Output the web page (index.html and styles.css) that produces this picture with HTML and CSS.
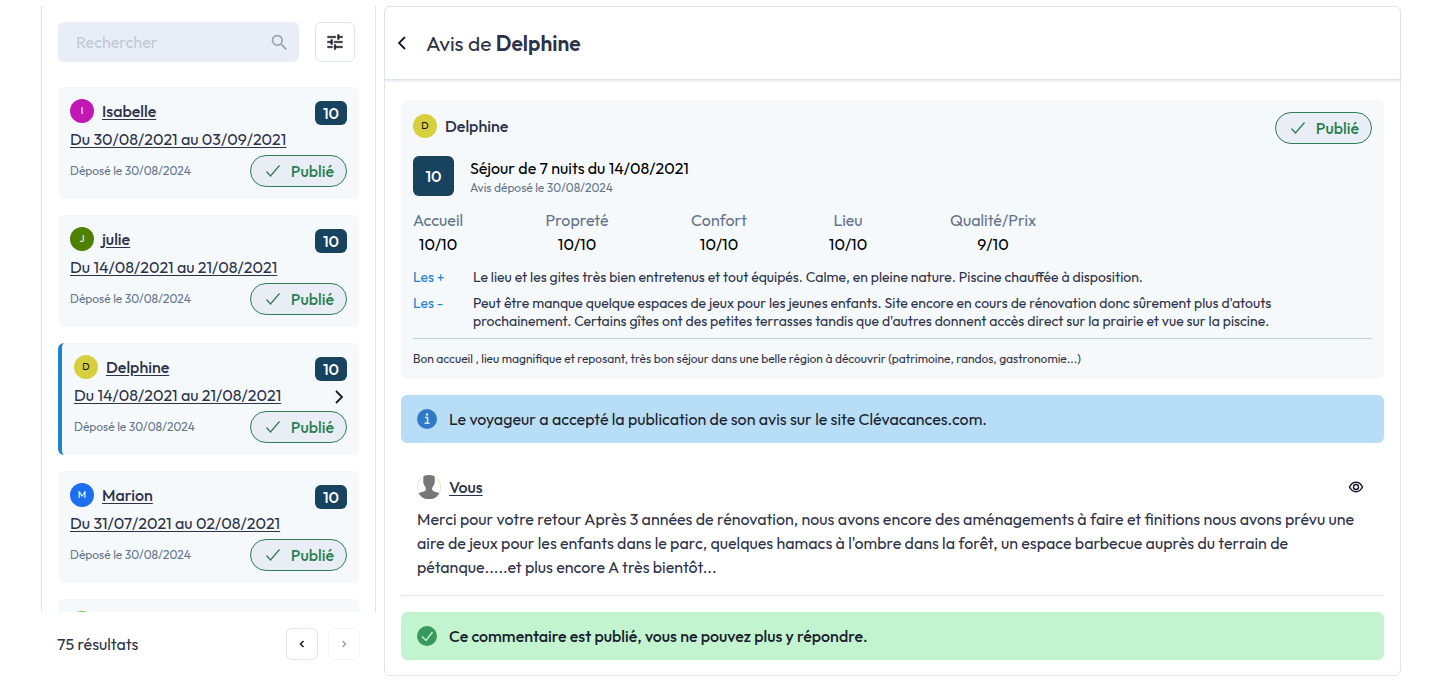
FILE: index.html
```html
<!DOCTYPE html>
<html lang="fr">
<head>
<meta charset="utf-8">
<meta name="viewport" content="width=device-width, initial-scale=1">
<title>Avis de Delphine</title>
<link rel="stylesheet" href="styles.css">
</head>
<body>
<svg class="sprite" aria-hidden="true">
  <symbol id="check" viewBox="0 0 16 16"><path d="M1.500 8.500 5.500 13 14.500 2.500" fill="none" stroke="currentColor" stroke-width="1.300"/></symbol>
  <symbol id="left" viewBox="0 0 16 16"><path d="M11 2 5 8l6 6" fill="none" stroke="currentColor" stroke-width="1.800"/></symbol>
  <symbol id="right" viewBox="0 0 16 16"><path d="M5 2l6 6-6 6" fill="none" stroke="currentColor" stroke-width="1.800"/></symbol>
</svg>
<main class="layout">
  <aside class="sidebar">
    <div class="list-panel">
      <form class="search" role="search">
        <label class="search-box">
          <input class="search-input" type="search" placeholder="Rechercher" aria-label="Rechercher">
          <svg class="search-icon" viewBox="0 0 24 24"><path fill="currentColor" d="M15.500 14h-.79l-.28-.27A6.470 6.470 0 0 0 16 9.500 6.500 6.500 0 1 0 9.500 16c1.610 0 3.090-.59 4.230-1.570l.27.28v.79l5 4.990L20.490 19l-4.990-5zm-6 0a4.500 4.500 0 1 1 0-9 4.500 4.500 0 0 1 0 9z"/></svg>
        </label>
        <button class="icon-button filter" type="button" aria-label="Filtres">
          <svg class="filter-icon" viewBox="0 0 24 24"><path fill="currentColor" stroke="currentColor" stroke-width=".4" d="M3 17v2h6v-2H3zM3 5v2h10V5H3zm10 16v-2h8v-2h-8v-2h-2v6h2zM7 9v2H3v2h4v2h2V9H7zm14 4v-2H11v2h10zm-6-4h2V7h4V5h-4V3h-2v6z"/></svg>
        </button>
      </form>
      <div class="cards">
        <article class="card">
          <div class="card-top">
            <div class="card-info">
              <div class="person"><span class="avatar magenta">I</span><a class="name" href="#isabelle">Isabelle</a></div>
              <a class="dates" href="#isabelle">Du 30/08/2021 au 03/09/2021</a>
            </div>
            <div class="card-side"><span class="score">10</span></div>
          </div>
          <div class="card-bottom"><span class="posted">Déposé le 30/08/2024</span><span class="pill"><svg class="pill-icon"><use href="#check"/></svg>Publié</span></div>
        </article>
        <article class="card">
          <div class="card-top">
            <div class="card-info">
              <div class="person"><span class="avatar green">J</span><a class="name" href="#julie">julie</a></div>
              <a class="dates" href="#julie">Du 14/08/2021 au 21/08/2021</a>
            </div>
            <div class="card-side"><span class="score">10</span></div>
          </div>
          <div class="card-bottom"><span class="posted">Déposé le 30/08/2024</span><span class="pill"><svg class="pill-icon"><use href="#check"/></svg>Publié</span></div>
        </article>
        <article class="card selected">
          <div class="card-top">
            <div class="card-info">
              <div class="person"><span class="avatar yellow">D</span><a class="name" href="#delphine">Delphine</a></div>
              <a class="dates" href="#delphine">Du 14/08/2021 au 21/08/2021</a>
            </div>
            <div class="card-side"><span class="score">10</span><svg class="chevron"><use href="#right"/></svg></div>
          </div>
          <div class="card-bottom"><span class="posted">Déposé le 30/08/2024</span><span class="pill"><svg class="pill-icon"><use href="#check"/></svg>Publié</span></div>
        </article>
        <article class="card">
          <div class="card-top">
            <div class="card-info">
              <div class="person"><span class="avatar blue">M</span><a class="name" href="#marion">Marion</a></div>
              <a class="dates" href="#marion">Du 31/07/2021 au 02/08/2021</a>
            </div>
            <div class="card-side"><span class="score">10</span></div>
          </div>
          <div class="card-bottom"><span class="posted">Déposé le 30/08/2024</span><span class="pill"><svg class="pill-icon"><use href="#check"/></svg>Publié</span></div>
        </article>
        <article class="card"><span class="avatar lime"></span></article>
      </div>
    </div>
    <footer class="pager">
      <span class="count">75 résultats</span>
      <button class="icon-button page" type="button" aria-label="Page précédente"><svg class="page-icon" viewBox="0 0 8 8"><path d="M5.500 1 2.500 4l3 3" fill="none" stroke="currentColor" stroke-width="1.500"/></svg></button>
      <button class="icon-button page" type="button" aria-label="Page suivante" disabled><svg class="page-icon" viewBox="0 0 8 8"><path d="M2.500 1l3 3-3 3" fill="none" stroke="currentColor" stroke-width="1.500"/></svg></button>
    </footer>
  </aside>

  <section class="detail">
    <header class="detail-header">
      <button class="back" type="button" aria-label="Retour"><svg class="chevron"><use href="#left"/></svg></button>
      <h1 class="title">Avis de <strong class="title-name">Delphine</strong></h1>
    </header>
    <div class="detail-body">
      <article class="review">
        <div class="review-head">
          <div class="person"><span class="avatar yellow">D</span><span class="author">Delphine</span></div>
          <span class="pill"><svg class="pill-icon"><use href="#check"/></svg>Publié</span>
        </div>
        <div class="stay">
          <span class="stay-score">10</span>
          <div class="stay-text"><h2 class="stay-title">Séjour de 7 nuits du 14/08/2021</h2><p class="posted">Avis déposé le 30/08/2024</p></div>
        </div>
        <dl class="grades">
          <div class="grade"><dt class="grade-label">Accueil</dt><dd class="grade-value">10/10</dd></div>
          <div class="grade"><dt class="grade-label">Propreté</dt><dd class="grade-value">10/10</dd></div>
          <div class="grade"><dt class="grade-label">Confort</dt><dd class="grade-value">10/10</dd></div>
          <div class="grade"><dt class="grade-label">Lieu</dt><dd class="grade-value">10/10</dd></div>
          <div class="grade"><dt class="grade-label">Qualité/Prix</dt><dd class="grade-value">9/10</dd></div>
        </dl>
        <dl class="points">
          <dt class="point-label">Les +</dt>
          <dd class="point-text">Le lieu et les gites très bien entretenus et tout équipés. Calme, en pleine nature. Piscine chauffée à disposition.</dd>
          <dt class="point-label">Les -</dt>
          <dd class="point-text">Peut être manque quelque espaces de jeux pour les jeunes enfants. Site encore en cours de rénovation donc sûrement plus d'atouts prochainement. Certains gîtes ont des petites terrasses tandis que d'autres donnent accès direct sur la prairie et vue sur la piscine.</dd>
        </dl>
        <p class="comment">Bon accueil , lieu magnifique et reposant, très bon séjour dans une belle région à découvrir (patrimoine, randos, gastronomie...)</p>
      </article>
      <div class="alert info">
        <svg class="alert-icon" viewBox="0 0 20 20"><circle cx="10" cy="10" r="10" fill="#3178c6"/><path d="M8 8.500h2.500V14M7.500 14.200h5" fill="none" stroke="#d7ebfa" stroke-width="1.500"/><circle cx="10" cy="5.500" r="1.200" fill="#d7ebfa"/></svg>
        <span class="alert-text">Le voyageur a accepté la publication de son avis sur le site Clévacances.com.</span>
      </div>
      <article class="reply">
        <div class="reply-head">
          <div class="person">
            <svg class="photo" viewBox="0 0 24 24"><circle cx="12" cy="12" r="11.700" fill="#fff" stroke="#d4d8a0" stroke-width=".6"/><path d="M6.600 1.300Q12-1.200 17.400 1.300C17.800 4 17.800 5.500 17.600 6.500c.4.500.2 2-.5 2.500-.4 1.600-1 2.700-1.900 3.500v2.800c1.500 1.700 5.300 1.700 7.200 3A12 12 0 0 1 1.600 18.300c1.900-1.300 5.700-1.300 7.200-3v-2.800C7.900 11.700 7.300 10.600 6.900 9c-.7-.5-.9-2-.5-2.500C6.200 5.500 6.200 4 6.600 1.300z" fill="#777"/></svg>
            <a class="name" href="#vous">Vous</a>
          </div>
          <button class="visibility" type="button" aria-label="Afficher"><svg class="eye" viewBox="0 0 16 16"><path d="M1.500 8C3 4.900 5.300 3.300 8 3.300S13 4.900 14.500 8C13 11.100 10.700 12.700 8 12.700S3 11.100 1.500 8z" fill="none" stroke="currentColor" stroke-width="1.500"/><circle cx="8" cy="8" r="2.500" fill="none" stroke="currentColor" stroke-width="1.400"/></svg></button>
        </div>
        <p class="reply-text">Merci pour votre retour Après 3 années de rénovation, nous avons encore des aménagements à faire et finitions nous avons prévu une aire de jeux pour les enfants dans le parc, quelques hamacs à l'ombre dans la forêt, un espace barbecue auprès du terrain de pétanque.....et plus encore A très bientôt...</p>
      </article>
      <div class="alert success">
        <svg class="alert-icon" viewBox="0 0 20 20"><circle cx="10" cy="10" r="10" fill="#38995c"/><path d="M5 10.500 9 14.500 15.500 6" fill="none" stroke="#c3f4d0" stroke-width="1.400"/></svg>
        <strong class="alert-text strong">Ce commentaire est publié, vous ne pouvez plus y répondre.</strong>
      </div>
    </div>
  </section>
</main>
</body>
</html>
```
FILE: styles.css
```css
* { box-sizing: border-box; }
body, h1, h2, p, dl, dd { margin: 0; }
body {
  font-family: Outfit, Lato, sans-serif;
  font-size: 16px;
  line-height: 24px;
  color: #2d3248;
  background: #fff;
}
button, input { font: inherit; color: inherit; }
button { padding: 0; border: 0; background: none; }
svg { display: block; flex: none; }
.sprite { position: absolute; width: 0; height: 0; }
.layout {
  display: grid;
  grid-template-columns: 335px minmax(0, 1fr);
  gap: 8px;
  height: 100vh;
  padding: 6px 39px 13px 41px;
}
.sidebar { display: flex; flex-direction: column; min-height: 0; }
.list-panel {
  flex: 1;
  min-height: 0;
  overflow: hidden;
  padding: 16px 16px 0;
  border: solid #dee4ee;
  border-width: 0 1px;
}
.search { display: flex; gap: 16px; margin: 0 4px 25px 0; }
.search-box {
  display: flex;
  flex: 1;
  align-items: center;
  min-width: 0;
  padding: 0 9px 0 18px;
  border-radius: 6px;
  background: #e9eef6;
}
.search-input { flex: 1; min-width: 0; height: 40px; padding: 0; border: 0; outline: 0; background: none; }
.search-input::placeholder { color: #bec9d7; opacity: 1; }
.search-icon { width: 21px; height: 21px; color: #97a5b9; }
.icon-button {
  display: flex;
  align-items: center;
  justify-content: center;
  border: 1px solid #dee4ee;
  border-radius: 6px;
  background: #fff;
  color: #1a1a24;
}
.filter { width: 40px; height: 40px; }
.filter-icon { width: 20px; height: 20px; }
.cards { display: grid; gap: 16px; }
.card {
  display: flex;
  flex-direction: column;
  gap: 4px;
  min-height: 112px;
  padding: 12px;
  border-radius: 6px;
  background: #f5f9fc;
}
.selected { border-left: 4px solid #2183cb; }
.card-top, .card-bottom, .review-head, .reply-head { display: flex; justify-content: space-between; }
.card-bottom { align-items: center; }
.card-info { display: grid; gap: 4px; justify-items: start; }
.card-side { display: flex; flex-direction: column; gap: 8px; align-items: flex-end; padding-top: 2px; }
.person { display: flex; align-items: center; gap: 8px; }
.avatar {
  display: flex;
  align-items: center;
  justify-content: center;
  width: 24px;
  height: 24px;
  border-radius: 50%;
  font-size: 10px;
  font-weight: 400;
  color: #fff;
}
.magenta { background: #c017b5; }
.green { background: #4f8000; }
.yellow { background: #d8cf3f; color: #111; }
.blue { background: #1e6ef0; }
.lime { background: #64c832; }
.name, .author { font-weight: 500; color: #2d3248; }
.name, .dates { text-underline-offset: 2px; }
.dates { color: #2d3248; }
.score, .stay-score {
  display: flex;
  align-items: center;
  justify-content: center;
  border-radius: 6px;
  background: #18435e;
  color: #fff;
  font-weight: 500;
}
.score { width: 32px; height: 24px; }
.chevron { width: 16px; height: 16px; color: #1a1a24; }
.posted { font-size: 12px; line-height: 16px; color: #64748b; }
.pill {
  display: flex;
  align-items: center;
  justify-content: space-between;
  width: 97px;
  height: 32px;
  padding: 0 12px 0 14px;
  border: 1px solid #2c7f50;
  border-radius: 16px;
  background: #e9eef6;
  color: #2c7f50;
  font-weight: 500;
}
.pill-icon { width: 16px; height: 16px; }
.pager { display: flex; align-items: center; gap: 10px; height: 64px; padding: 0 16px; }
.count { flex: 1; }
.page { width: 32px; height: 32px; }
.page-icon { width: 8px; height: 8px; }
.page:disabled { opacity: .4; }

.detail { display: flex; flex-direction: column; border: 1px solid #dee4ee; border-radius: 6px; }
.detail-header {
  display: flex;
  align-items: center;
  gap: 16px;
  height: 73px;
  padding: 0 9px;
  border-bottom: 1px solid #dee4ee;
  box-shadow: 0 1px 2px #dee4ee;
}
.title { font-size: 21px; font-weight: 400; }
.title-name { font-weight: 600; }
.detail-body { display: grid; gap: 16px; padding: 20px 16px 15px; }
.review { padding: 12px; border-radius: 6px; background: #f5f9fc; }
.review-head { align-items: flex-start; }
.review-head .person { padding-top: 2px; }
.stay { display: flex; gap: 16px; margin-top: 12px; }
.stay-score { width: 41px; height: 40px; }
.stay-title { font-size: 16px; font-weight: 400; color: #000; }
.grades { display: grid; grid-template-columns: 50px 64px 56px 38px 88px; gap: 82px; margin-top: 12px; }
.grade { display: flex; flex-direction: column; align-items: center; white-space: nowrap; }
.grade-label { color: #64748b; }
.grade-value { color: #000; }
.points { display: grid; grid-template-columns: 60px minmax(0, 1fr); gap: 8px 0; margin-top: 12px; padding-right: 40px; font-size: 14px; line-height: 18px; }
.point-label { color: #2183cb; }
.comment { margin-top: 8px; padding-top: 12px; border-top: 1px solid #c3cfe0; font-size: 12px; line-height: 16px; }
.alert { display: flex; align-items: center; gap: 12px; padding: 12px 16px; border-radius: 6px; color: #1a1d2c; }
.info { background: #b8def7; }
.success { background: #c3f4d0; }
.alert-icon { width: 20px; height: 20px; }
.strong { font-weight: 500; }
.reply { padding: 16px; border-bottom: 1px solid #dee4ee; }
.photo { width: 24px; height: 24px; }
.visibility { width: 24px; height: 24px; display: flex; align-items: center; justify-content: center; }
.eye { width: 16px; height: 16px; color: #1a1d2c; }
.reply-text { margin-top: 8px; }
```
